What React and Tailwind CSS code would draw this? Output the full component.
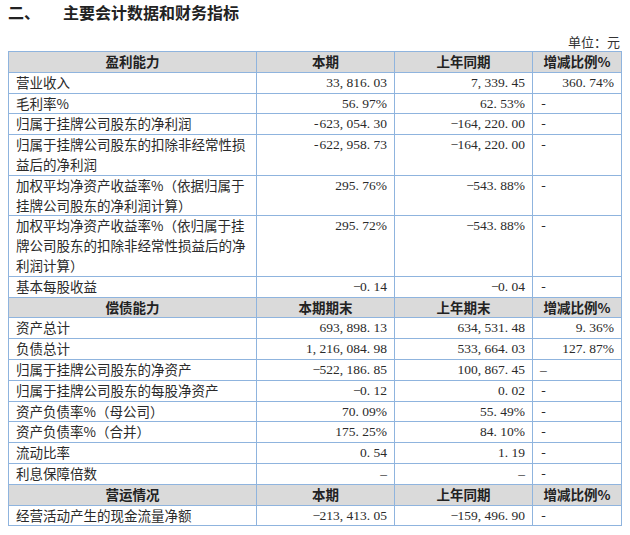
import React from 'react'

const sections = [
    {
        head: ['盈利能力', '本期', '上年同期', '增减比例%'],
        rows: [
            [['营业收入'], '33,816.03', '7,339.45', '360.74%'],
            [['毛利率%'], '56.97%', '62.53%', '-'],
            [['归属于挂牌公司股东的净利润'], '-623,054.30', '−164,220.00', '-'],
            [['归属于挂牌公司股东的扣除非经常性损', '益后的净利润'], '-622,958.73', '−164,220.00', '-'],
            [['加权平均净资产收益率%（依据归属于', '挂牌公司股东的净利润计算）'], '295.76%', '−543.88%', '-'],
            [['加权平均净资产收益率%（依归属于挂', '牌公司股东的扣除非经常性损益后的净', '利润计算）'], '295.72%', '−543.88%', '-'],
            [['基本每股收益'], '−0.14', '−0.04', '-'],
        ],
    },
    {
        head: ['偿债能力', '本期期末', '上年期末', '增减比例%'],
        rows: [
            [['资产总计'], '693,898.13', '634,531.48', '9.36%'],
            [['负债总计'], '1,216,084.98', '533,664.03', '127.87%'],
            [['归属于挂牌公司股东的净资产'], '−522,186.85', '100,867.45', '–'],
            [['归属于挂牌公司股东的每股净资产'], '−0.12', '0.02', '-'],
            [['资产负债率%（母公司）'], '70.09%', '55.49%', '-'],
            [['资产负债率%（合并）'], '175.25%', '84.10%', '-'],
            [['流动比率'], '0.54', '1.19', '-'],
            [['利息保障倍数'], '–', '–', '-'],
        ],
    },
    {
        head: ['营运情况', '本期', '上年同期', '增减比例%'],
        rows: [
            [['经营活动产生的现金流量净额'], '−213,413.05', '−159,496.90', '-'],
        ],
    },
]

// song-style numbers: punctuation takes half an em like the digits
const Num = ({ v }) =>
    [...v].map((c, i) =>
        c === ',' || c === '.' ? (
            <span key={i} className="inline-block w-[0.5em] text-left">{c}</span>
        ) : c === '-' || c === '−' || c === '–' ? (
            <span key={i} className="inline-block w-[0.5em] text-center">{c}</span>
        ) : (
            c
        )
    )

const cell = 'border border-[#8fb4de] px-[7px] py-0 align-top leading-[19.8px]'
const num = cell + " font-['Liberation_Serif',serif] text-[#2a2a2a]"

export default function App() {
    return (
        <div className="w-[630px] h-[535px] overflow-hidden bg-white text-[#222] font-['Noto_Sans_CJK_SC',sans-serif]">
            <div className="flex h-[25px] items-center pl-2 text-[16px] font-bold leading-[25px]">
                <span className="w-[55px]">二、</span>
                <span>主要会计数据和财务指标</span>
            </div>
            <div className="flex h-[26px] items-end justify-end pr-[10px] text-[13px] leading-[18px] text-[#333]">
                单位：元
            </div>
            <table className="ml-2 w-[614px] table-fixed border-collapse text-[13.5px]">
                <colgroup>
                    <col className="w-[248px]" />
                    <col className="w-[138px]" />
                    <col className="w-[138px]" />
                    <col className="w-[89px]" />
                </colgroup>
                {sections.map((s) => (
                    <tbody key={s.head[0]}>
                        <tr className="bg-[#dadada]">
                            {s.head.map((h) => (
                                <th key={h} className={cell + ' text-center font-bold'}>
                                    {h}
                                </th>
                            ))}
                        </tr>
                        {s.rows.map(([label, cur, prev, change]) => (
                            <tr key={label[0]}>
                                <td className={cell + ' text-left text-[#2a2a2a]'}>
                                    {label.map((l, i) => (
                                        <div key={i} className="whitespace-nowrap">{l}</div>
                                    ))}
                                </td>
                                <td className={num + ' text-right'}>
                                    <Num v={cur} />
                                </td>
                                <td className={num + ' text-right'}>
                                    <Num v={prev} />
                                </td>
                                <td className={num + (change.length > 1 ? ' text-right' : ' text-left')}>
                                    <Num v={change} />
                                </td>
                            </tr>
                        ))}
                    </tbody>
                ))}
            </table>
        </div>
    )
}
